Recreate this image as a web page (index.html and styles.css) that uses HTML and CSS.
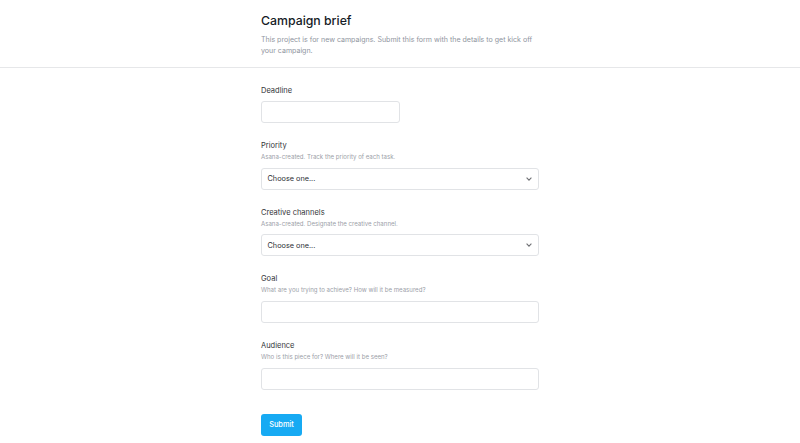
FILE: index.html
```html
<!DOCTYPE html>
<html lang="en">
<head>
<meta charset="utf-8">
<title>Campaign brief</title>
<link rel="stylesheet" href="styles.css">
</head>
<body>
<header class="header">
  <div class="column">
    <h1 class="title">Campaign brief</h1>
    <p class="intro">This project is for new campaigns. Submit this form with the details to get kick off your campaign.</p>
  </div>
</header>
<main class="column form">
  <div class="field">
    <label class="label">Deadline</label>
    <div class="input input-short"></div>
  </div>
  <div class="field">
    <label class="label">Priority</label>
    <p class="hint">Asana-created. Track the priority of each task.</p>
    <div class="input select">
      <span>Choose one...</span>
      <svg class="chevron" width="6" height="4" viewBox="0 0 6 4"><path d="M0.6 0.7 L3 3.1 L5.4 0.7" fill="none" stroke="#6f7074" stroke-width="1.1"/></svg>
    </div>
  </div>
  <div class="field">
    <label class="label">Creative channels</label>
    <p class="hint">Asana-created. Designate the creative channel.</p>
    <div class="input select">
      <span>Choose one...</span>
      <svg class="chevron" width="6" height="4" viewBox="0 0 6 4"><path d="M0.6 0.7 L3 3.1 L5.4 0.7" fill="none" stroke="#6f7074" stroke-width="1.1"/></svg>
    </div>
  </div>
  <div class="field">
    <label class="label">Goal</label>
    <p class="hint">What are you trying to achieve? How will it be measured?</p>
    <div class="input"></div>
  </div>
  <div class="field">
    <label class="label">Audience</label>
    <p class="hint">Who is this piece for? Where will it be seen?</p>
    <div class="input"></div>
  </div>
  <button class="submit" type="button">Submit</button>
</main>
</body>
</html>
```
FILE: styles.css
```css
* { box-sizing: border-box; }
html, body { margin: 0; padding: 0; background: #ffffff; }
body {
  font-family: Inter, "Liberation Sans", sans-serif;
  color: #1e1f21;
  height: 443px;
  overflow: hidden;
}
.column {
  width: 278px;
  margin: 0 auto;
}
.header {
  padding-top: 12.7px;
  padding-bottom: 11px;
  border-bottom: 1px solid #e6e7e9;
}
.title {
  margin: 0;
  font-size: 12.3px;
  line-height: 16px;
  font-weight: 500;
  color: #151b26;
}
.intro {
  margin: 5.8px 0 0;
  font-size: 7.05px;
  line-height: 11px;
  color: #8f95a0;
}
.form {
  padding-top: 16.2px;
}
.field {
  margin-bottom: 17.1px;
}
.label {
  display: block;
  font-size: 7.5px;
  line-height: 11px;
  color: #333539;
}
.hint {
  margin: 0;
  font-size: 6.1px;
  line-height: 11px;
  color: #9ba0a8;
}
.input {
  margin-top: 5.5px;
  height: 22px;
  border: 1px solid #e1e3e6;
  border-radius: 3px;
  background: #fff;
}
.input-short {
  width: 139px;
}
.select {
  display: flex;
  align-items: center;
  justify-content: space-between;
  padding: 0 6px 0 5.5px;
  font-size: 7.3px;
  color: #2e3035;
}
.chevron { display: block; }
.submit {
  display: block;
  margin-top: 24px;
  height: 22px;
  width: 41px;
  padding: 0;
  border: none;
  border-radius: 3px;
  background: #17aaf3;
  color: #ffffff;
  font-family: Inter, "Liberation Sans", sans-serif;
  font-size: 7.4px;
  font-weight: 500;
}
```
